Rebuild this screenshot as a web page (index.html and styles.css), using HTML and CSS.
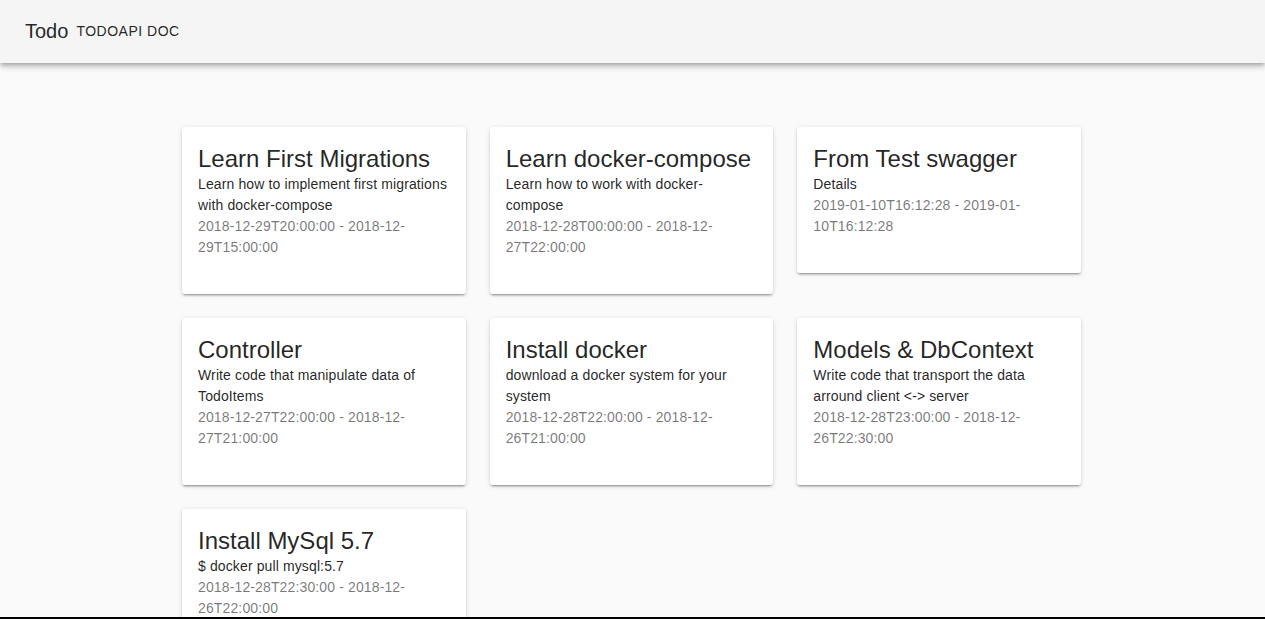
FILE: index.html
```html
<!DOCTYPE html>
<html>
<head>
<meta charset="utf-8">
<link rel="stylesheet" href="styles.css">
</head>
<body>
<header class="toolbar">
  <span class="title">Todo</span>
  <span class="nav-btn">TodoApi Doc</span>
</header>
<main class="content">
  <div class="grid">
    <div class="card">
      <div class="card-title">Learn First Migrations</div>
      <div class="card-desc">Learn how to implement first migrations with docker-compose</div>
      <div class="card-date">2018-12-29T20:00:00 - 2018-12-29T15:00:00</div>
    </div>
    <div class="card">
      <div class="card-title">Learn docker-compose</div>
      <div class="card-desc">Learn how to work with docker-compose</div>
      <div class="card-date">2018-12-28T00:00:00 - 2018-12-27T22:00:00</div>
    </div>
    <div class="card">
      <div class="card-title">From Test swagger</div>
      <div class="card-desc">Details</div>
      <div class="card-date">2019-01-10T16:12:28 - 2019-01-10T16:12:28</div>
    </div>
    <div class="card">
      <div class="card-title">Controller</div>
      <div class="card-desc">Write code that manipulate data of TodoItems</div>
      <div class="card-date">2018-12-27T22:00:00 - 2018-12-27T21:00:00</div>
    </div>
    <div class="card">
      <div class="card-title">Install docker</div>
      <div class="card-desc">download a docker system for your system</div>
      <div class="card-date">2018-12-28T22:00:00 - 2018-12-26T21:00:00</div>
    </div>
    <div class="card">
      <div class="card-title">Models &amp; DbContext</div>
      <div class="card-desc">Write code that transport the data arround client &lt;-&gt; server</div>
      <div class="card-date">2018-12-28T23:00:00 - 2018-12-26T22:30:00</div>
    </div>
    <div class="card">
      <div class="card-title">Install MySql 5.7</div>
      <div class="card-desc">$ docker pull mysql:5.7</div>
      <div class="card-date">2018-12-28T22:30:00 - 2018-12-26T22:00:00</div>
    </div>
  </div>
</main>
<div class="bottom-edge"></div>
</body>
</html>
```
FILE: styles.css
```css
html, body {
  margin: 0;
  padding: 0;
}
body {
  background: #fafafa;
  font-family: "Liberation Sans", Arial, sans-serif;
  color: rgba(0,0,0,0.87);
  overflow: hidden;
  height: 619px;
}
.toolbar {
  height: 63px;
  background: #f5f5f5;
  display: flex;
  align-items: center;
  padding-left: 25px;
  box-shadow: 0 2px 4px -1px rgba(0,0,0,.2), 0 4px 5px 0 rgba(0,0,0,.14), 0 1px 10px 0 rgba(0,0,0,.12);
  position: relative;
  z-index: 2;
}
.title {
  font-size: 20px;
  color: rgba(0,0,0,0.87);
  margin-right: 8px;
}
.nav-btn {
  font-size: 14px;
  text-transform: uppercase;
  letter-spacing: 0.5px;
  color: rgba(0,0,0,0.87);
  position: relative;
  top: -1px;
}
.content {
  padding-top: 64px;
  display: flex;
  justify-content: center;
}
.grid {
  display: grid;
  grid-template-columns: repeat(3, 283.67px);
  gap: 24px;
  align-items: start;
  margin-left: -2px;
}
.card {
  background: #fff;
  border-radius: 3px;
  box-shadow: 0 3px 1px -2px rgba(0,0,0,.2), 0 2px 2px 0 rgba(0,0,0,.14), 0 1px 5px 0 rgba(0,0,0,.12);
  padding: 16px 16px 36px 16px;
}
.card-title {
  font-size: 24px;
  line-height: 31px;
  color: rgba(0,0,0,0.87);
}
.card-desc {
  font-size: 14px;
  line-height: 21px;
  letter-spacing: 0.12px;
  color: rgba(0,0,0,0.87);
}
.card-date {
  font-size: 14px;
  line-height: 21px;
  letter-spacing: 0.13px;
  color: rgba(0,0,0,0.54);
}
.bottom-edge {
  position: fixed;
  left: 0;
  right: 0;
  bottom: 0;
  height: 2px;
  background: #000;
  z-index: 5;
}
```
